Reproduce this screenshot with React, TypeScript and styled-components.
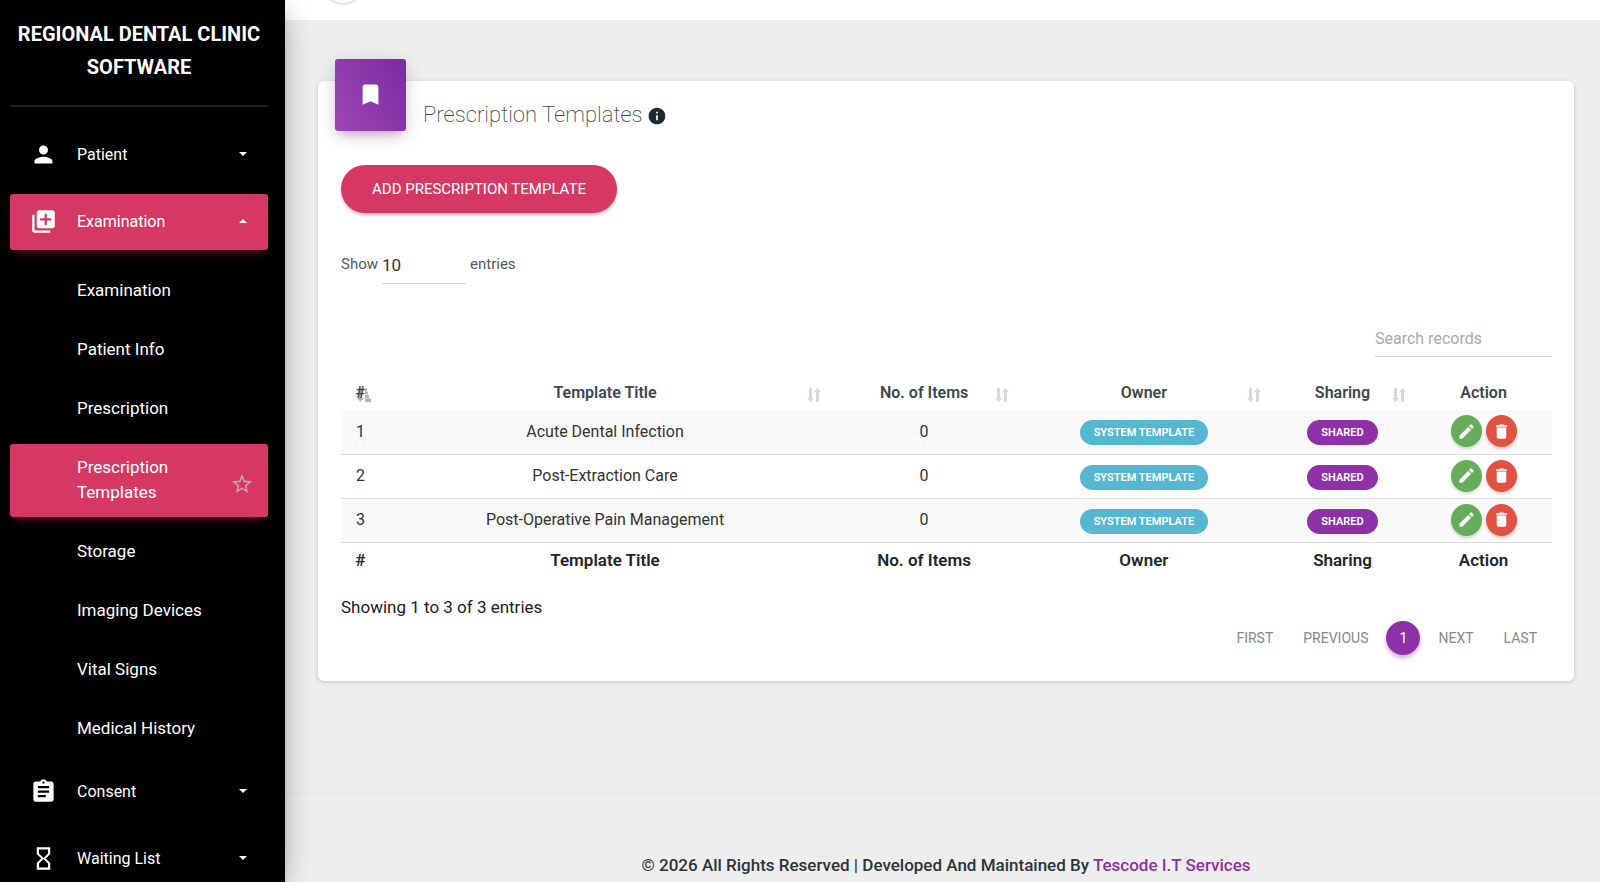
import React from 'react';
import styled, { createGlobalStyle, css } from 'styled-components';
import {
  MdPerson, MdLibraryAdd, MdAssignment, MdHourglassEmpty, MdBookmark,
  MdInfo, MdEdit, MdDelete, MdStarBorder,
} from 'react-icons/md';

const GlobalStyle = createGlobalStyle`
  *, *::before, *::after { box-sizing: border-box; }
  body {
    margin: 0;
    background: #eeeeee;
    color: #212529;
    font-family: Roboto, "Liberation Sans", sans-serif;
    font-size: 17px;
  }
  button, input, select { font-family: inherit; }
`;

const Shell = styled.div`
  display: flex;
  height: 100vh;
  overflow: hidden;
`;

const Sidebar = styled.aside`
  flex: 0 0 285px;
  z-index: 2;
  overflow: hidden;
  padding: 18px 17px 0 10px;
  background: #000;
  box-shadow: 0 10px 32px -12px rgba(0, 0, 0, 0.42), 0 4px 28px rgba(0, 0, 0, 0.12),
    0 8px 10px -5px rgba(0, 0, 0, 0.2);
`;

const Brand = styled.a`
  display: block;
  padding-bottom: 21px;
  border-bottom: 2px solid #1f1f1f;
  color: #fff;
  font-size: 20px;
  font-weight: 700;
  line-height: 33px;
  text-align: center;
  text-decoration: none;
  text-transform: uppercase;
`;

const NavList = styled.ul`
  display: flex;
  flex-direction: column;
  gap: 11px;
  margin: 0;
  padding: 20px 0 0;
  list-style: none;
`;

const SubList = styled(NavList)`
  padding: 17px 0 0;
`;

const highlighted = css`
  background: #d63864;
  box-shadow: 0 4px 20px rgba(0, 0, 0, 0.14), 0 7px 10px -5px rgba(233, 30, 99, 0.5);
`;

const NavButton = styled.button<{ $active?: boolean }>`
  display: flex;
  align-items: center;
  width: 100%;
  height: 56px;
  padding: 0 21px 2px 20px;
  border: 0;
  border-radius: 3px;
  background: transparent;
  color: #fff;
  font-size: 16px;
  text-align: left;
  ${(p) => p.$active && highlighted}
  svg { flex: none; width: 27px; height: 27px; margin-right: 20px; }
`;

const Caret = styled.i<{ $up?: boolean }>`
  margin-left: auto;
  border: solid transparent;
  border-width: ${(p) => (p.$up ? '0 4px 4px' : '4px 4px 0')};
  border-${(p) => (p.$up ? 'bottom' : 'top')}-color: #fff;
`;

const SubLink = styled.a<{ $active?: boolean }>`
  display: flex;
  align-items: center;
  justify-content: space-between;
  padding: 11px 14px 12px 67px;
  border-radius: 3px;
  color: #fff;
  font-size: 17px;
  line-height: 25px;
  text-decoration: none;
  ${(p) => p.$active && highlighted}
  svg { flex: none; width: 24px; height: 24px; margin-top: 8px; color: #c0a4b8; }
`;

const Main = styled.div`
  flex: 1;
  min-width: 0;
  display: flex;
  flex-direction: column;
`;

const TopBar = styled.header`
  flex: none;
  height: 20px;
  padding: 0 38px;
  background: #fff;
  overflow: hidden;
`;

const RoundToggle = styled.button`
  display: block;
  width: 40px;
  height: 40px;
  margin-top: -37px;
  border: 0;
  border-radius: 50%;
  background: #fff;
  box-shadow: 0 1px 3px rgba(0, 0, 0, 0.2);
`;

const Content = styled.main`
  flex: none;
  padding: 61px 26px 112px 33px;
`;

const Card = styled.section`
  padding: 0 22px 26px 23px;
  border-radius: 6px;
  background: #fff;
  box-shadow: 0 1px 4px rgba(0, 0, 0, 0.18);
`;

const CardHead = styled.div`
  display: flex;
  align-items: flex-start;
  height: 50px;
  margin-left: -6px;
`;

const CardIcon = styled.div`
  display: grid;
  place-items: center;
  width: 71px;
  height: 72px;
  margin: -22px 17px 0 0;
  padding-bottom: 2px;
  border-radius: 3px;
  background: linear-gradient(60deg, #9c47b4, #7c2aa0);
  color: #fff;
  box-shadow: 0 4px 20px rgba(0, 0, 0, 0.14), 0 7px 10px -5px rgba(156, 39, 176, 0.4);
  svg { width: 27px; height: 27px; }
`;

const CardTitle = styled.h4`
  display: flex;
  align-items: center;
  gap: 4px;
  margin: 17px 0 0;
  color: #4a4a4a;
  font-size: 22px;
  font-weight: 200;
  line-height: 34px;
  svg { width: 20px; height: 20px; margin-top: 2px; color: #212930; }
`;

const AddButton = styled.button`
  display: block;
  height: 48px;
  margin-top: 34px;
  padding: 0 31px;
  border: 0;
  border-radius: 24px;
  background: #d63864;
  box-shadow: 0 2px 3px rgba(214, 56, 100, 0.4);
  color: #fff;
  font-size: 15px;
  text-transform: uppercase;
`;

const LengthLabel = styled.label`
  display: flex;
  align-items: center;
  gap: 4px;
  height: 40px;
  margin-top: 31px;
  color: #495b63;
  font-size: 15px;
`;

const LengthSelect = styled.select`
  width: 84px;
  height: 39px;
  padding: 2px 0 0;
  border: 0;
  border-bottom: 1px solid #d2d2d2;
  border-radius: 0;
  appearance: none;
  background: transparent;
  color: #333;
  font-size: 17px;
`;

const SearchRow = styled.div`
  display: flex;
  justify-content: flex-end;
  margin-top: 33px;
`;

const SearchInput = styled.input`
  width: 177px;
  height: 40px;
  padding: 4px 0 0;
  border: 0;
  border-bottom: 1px solid #d2d2d2;
  background: transparent;
  color: #333;
  font-size: 16px;
  &::placeholder { color: #aaa; opacity: 1; }
`;

const DataTable = styled.table`
  width: 100%;
  margin-top: 17px;
  border-collapse: collapse;
  table-layout: fixed;
  text-align: center;

  th, td { padding: 0; }
  th { font-weight: 600; }
  thead th { height: 36px; color: #3c4850; font-size: 16px; }
  tbody td { height: 44px; padding-bottom: 1px; border-bottom: 1px solid #dcdcdc; color: #333; font-size: 16px; }
  tbody tr:nth-child(odd) { background: #f9f9f9; }
  tfoot th { height: 36px; font-size: 17px; }
`;

const Column = styled.col<{ $share: number }>`
  width: ${(p) => p.$share}%;
`;

const HeadCell = styled.div`
  position: relative;
  isolation: isolate;
  padding-top: 2px;
  line-height: 34px;
  svg { position: absolute; z-index: -1; top: 14px; right: 9px; width: 14px; height: 14px; }
`;

const Badge = styled.span<{ $color: string }>`
  display: block;
  width: fit-content;
  margin: 3px auto 0;
  padding: 0 14px;
  border-radius: 13px;
  background: ${(p) => p.$color};
  color: #fff;
  font-size: 11px;
  font-weight: 600;
  line-height: 25px;
  text-transform: uppercase;
`;

const Actions = styled.div`
  display: flex;
  justify-content: center;
  gap: 4px;
`;

const RoundButton = styled.button<{ $color: string }>`
  display: grid;
  place-items: center;
  width: 31px;
  height: 32px;
  padding: 0;
  border: 0;
  border-radius: 50%;
  background: ${(p) => p.$color};
  box-shadow: 0 2px 3px ${(p) => p.$color}55;
  color: #fff;
  svg { width: 19px; height: 19px; }
`;

const Summary = styled.p`
  margin: 17px 0 0;
  color: #212121;
  font-size: 17px;
  line-height: 24px;
`;

const Pager = styled.nav`
  display: flex;
  justify-content: flex-end;
  margin-top: 2px;
`;

const PageLink = styled.a<{ $current?: boolean }>`
  min-width: 34px;
  height: 34px;
  padding: 0 15px;
  border-radius: 17px;
  color: #888;
  font-size: 14px;
  line-height: 34px;
  text-align: center;
  text-decoration: none;
  text-transform: uppercase;
  ${(p) => p.$current && css`
    margin: 0 3px;
    padding: 0;
    background: #8e30a8;
    color: #fff;
    box-shadow: 0 3px 5px rgba(142, 48, 168, 0.4);
  `}
`;

const Footer = styled.footer`
  flex: none;
  padding: 59px 26px 20px 33px;
  border-top: 1px solid #e6e6e6;
  color: #2b3539;
  font-weight: 500;
  line-height: 24px;
  text-align: center;
  a { color: #8e30a8; text-decoration: none; }
`;

const SortBoth = () => (
  <svg viewBox="0 0 14 14" fill="#d8d8d8" aria-hidden="true">
    <path d="M2 0h3v10h2L3.500 14 0 10h2zM9 14h3V4h2L10.500 0 7 4h2z" />
  </svg>
);

const SortAscending = () => (
  <svg viewBox="0 0 14 14" fill="#b0b4b6" aria-hidden="true">
    <path d="M2 0h3v10h2L3.500 14 0 10h2zM8 0h2v3H8zM8 3.500h3v3H8zM8 7h4v3H8zM8 10.500h6V14H8z" />
  </svg>
);

const columns = [
  { label: '#', share: 3.2, sort: 'asc' },
  { label: 'Template Title', share: 37.2, sort: 'both' },
  { label: 'No. of Items', share: 15.5, sort: 'both' },
  { label: 'Owner', share: 20.8, sort: 'both' },
  { label: 'Sharing', share: 12, sort: 'both' },
  { label: 'Action', share: 11.3, sort: '' },
];

const templates = ['Acute Dental Infection', 'Post-Extraction Care', 'Post-Operative Pain Management'];

const subItems = [
  'Examination', 'Patient Info', 'Prescription', 'Prescription Templates',
  'Storage', 'Imaging Devices', 'Vital Signs', 'Medical History',
];

export default function App() {
  return (
    <>
      <GlobalStyle />
      <Shell>
        <Sidebar>
          <Brand href="#home">Regional Dental Clinic Software</Brand>
          <NavList>
            <li><NavButton><MdPerson />Patient<Caret /></NavButton></li>
            <li>
              <NavButton $active aria-expanded="true"><MdLibraryAdd />Examination<Caret $up /></NavButton>
              <SubList>
                {subItems.map((item) => {
                  const active = item === 'Prescription Templates';
                  return (
                    <li key={item}>
                      <SubLink href="#section" $active={active}>
                        {item}
                        {active && <MdStarBorder />}
                      </SubLink>
                    </li>
                  );
                })}
              </SubList>
            </li>
            <li><NavButton><MdAssignment />Consent<Caret /></NavButton></li>
            <li><NavButton><MdHourglassEmpty />Waiting List<Caret /></NavButton></li>
          </NavList>
        </Sidebar>
        <Main>
          <TopBar><RoundToggle aria-label="Toggle sidebar" /></TopBar>
          <Content>
            <Card>
              <CardHead>
                <CardIcon><MdBookmark /></CardIcon>
                <CardTitle>Prescription Templates<MdInfo /></CardTitle>
              </CardHead>
              <AddButton>Add Prescription Template</AddButton>
              <LengthLabel>
                Show
                <LengthSelect defaultValue="10">
                  <option>10</option>
                  <option>25</option>
                  <option>50</option>
                </LengthSelect>
                entries
              </LengthLabel>
              <SearchRow>
                <SearchInput type="search" placeholder="Search records" aria-label="Search records" />
              </SearchRow>
              <DataTable>
                <colgroup>
                  {columns.map((c) => <Column key={c.label} $share={c.share} />)}
                </colgroup>
                <thead>
                  <tr>
                    {columns.map((c) => (
                      <th key={c.label} scope="col">
                        <HeadCell>
                          {c.label}
                          {c.sort === 'both' && <SortBoth />}
                          {c.sort === 'asc' && <SortAscending />}
                        </HeadCell>
                      </th>
                    ))}
                  </tr>
                </thead>
                <tbody>
                  {templates.map((title, i) => (
                    <tr key={title}>
                      <td>{i + 1}</td>
                      <td>{title}</td>
                      <td>0</td>
                      <td><Badge $color="#55b7d1">System Template</Badge></td>
                      <td><Badge $color="#8e30a8">Shared</Badge></td>
                      <td>
                        <Actions>
                          <RoundButton $color="#66ac5b" aria-label={`Edit ${title}`}><MdEdit /></RoundButton>
                          <RoundButton $color="#e05241" aria-label={`Delete ${title}`}><MdDelete /></RoundButton>
                        </Actions>
                      </td>
                    </tr>
                  ))}
                </tbody>
                <tfoot>
                  <tr>{columns.map((c) => <th key={c.label}>{c.label}</th>)}</tr>
                </tfoot>
              </DataTable>
              <Summary>Showing 1 to 3 of 3 entries</Summary>
              <Pager aria-label="Table pages">
                <PageLink href="#first">First</PageLink>
                <PageLink href="#previous">Previous</PageLink>
                <PageLink href="#1" $current>1</PageLink>
                <PageLink href="#next">Next</PageLink>
                <PageLink href="#last">Last</PageLink>
              </Pager>
            </Card>
          </Content>
          <Footer>
            © 2026 All Rights Reserved | Developed And Maintained By <a href="#tescode">Tescode I.T Services</a>
          </Footer>
        </Main>
      </Shell>
    </>
  );
}
